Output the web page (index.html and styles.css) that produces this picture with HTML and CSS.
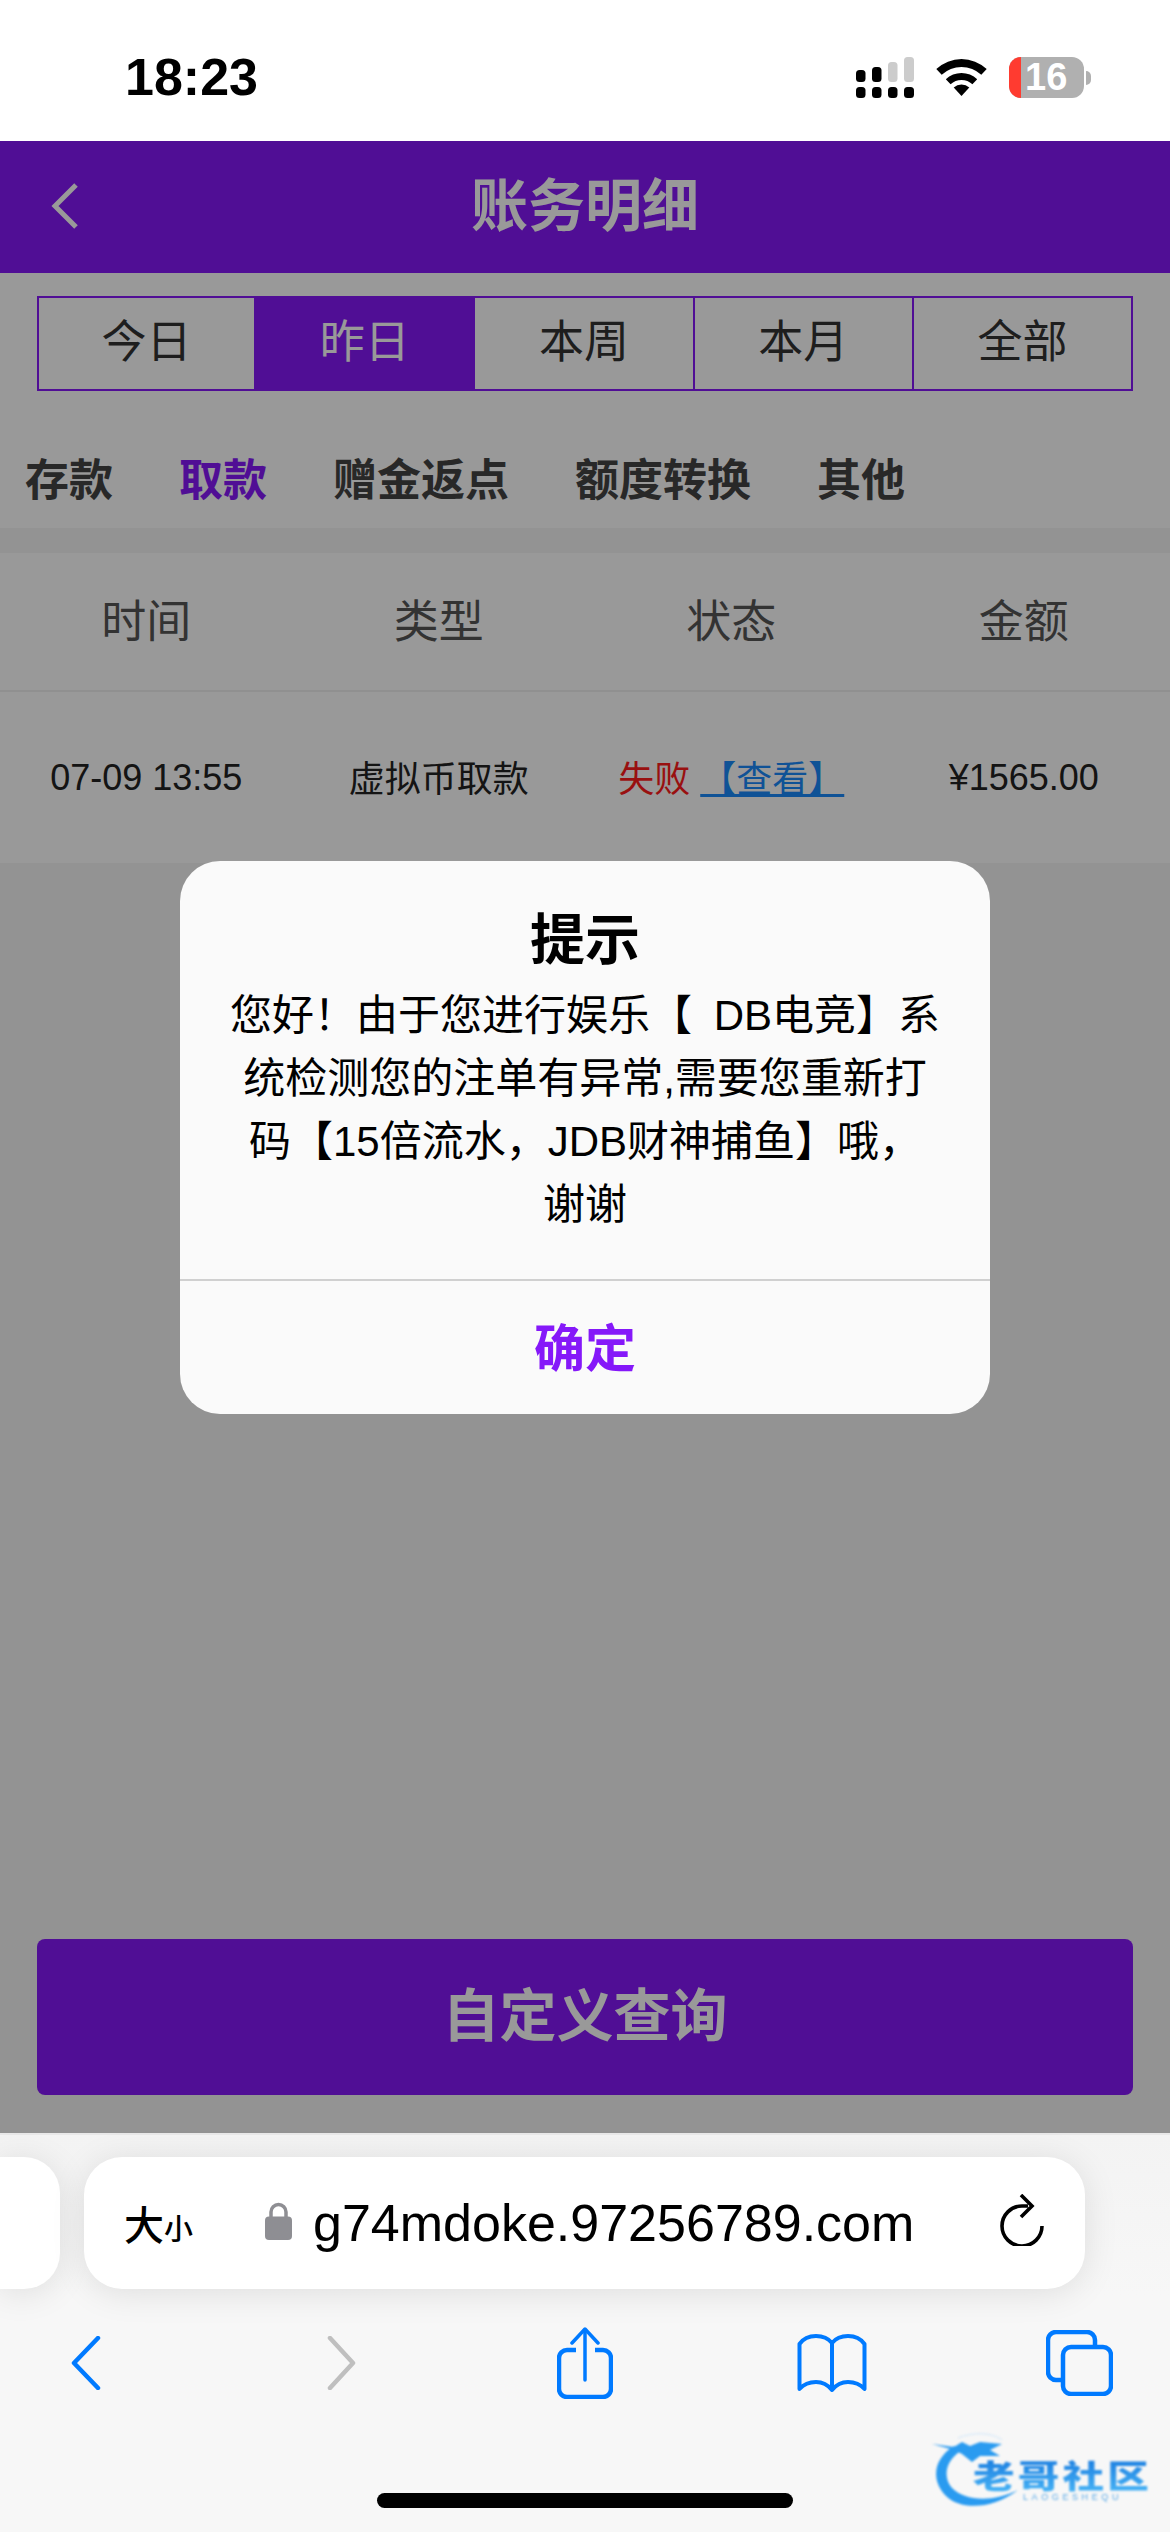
FILE: index.html
```html
<!DOCTYPE html>
<html lang="zh-CN">
<head>
<meta charset="utf-8">
<title>账务明细</title>
<link rel="stylesheet" href="styles.css">
</head>
<body>
<div class="phone">
  <div class="status">
    <div class="time">18:23</div>
    <div class="status-right">
      <svg class="signal" width="58" height="41" viewBox="0 0 58 41">
        <rect x="0" y="13" width="9.5" height="12" rx="3.5" fill="#000"/>
        <rect x="16" y="10" width="9.5" height="15" rx="3.5" fill="#000"/>
        <rect x="32" y="5" width="9.5" height="20" rx="3.5" fill="#ccc"/>
        <rect x="48" y="0" width="10" height="25" rx="3.5" fill="#ccc"/>
        <rect x="0" y="30" width="9.5" height="11" rx="3.5" fill="#000"/>
        <rect x="16" y="30" width="9.5" height="11" rx="3.5" fill="#000"/>
        <rect x="32" y="30" width="9.5" height="11" rx="3.5" fill="#000"/>
        <rect x="48" y="30" width="10" height="11" rx="3.5" fill="#000"/>
      </svg>
      <svg class="wifi" width="51" height="37" viewBox="0 0 51 37">
        <path d="M0.3 10 A37 37 0 0 1 50.7 10 L45.3 15.8 A29 29 0 0 0 5.7 15.8 Z" fill="#000"/>
        <path d="M9.8 20.2 A23 23 0 0 1 41.2 20.2 L36.4 25.3 A16 16 0 0 0 14.6 25.3 Z" fill="#000"/>
        <path d="M17.7 28.6 A11.5 11.5 0 0 1 33.3 28.6 L25.5 37 Z" fill="#000"/>
      </svg>
      <div class="battery">
        <span class="battery-low"></span>
        <span class="battery-num">16</span>
      </div>
    </div>
  </div>

  <div class="webview">
    <header class="navbar">
      <svg class="nav-back" width="28" height="46" viewBox="0 0 28 46">
        <path d="M25 2 L4 23 L25 44" fill="none" stroke="#fff" stroke-width="5"/>
      </svg>
      <h1 class="nav-title">账务明细</h1>
    </header>

    <div class="segments">
      <div class="seg">今日</div>
      <div class="seg seg-active">昨日</div>
      <div class="seg">本周</div>
      <div class="seg">本月</div>
      <div class="seg">全部</div>
    </div>

    <nav class="tabs">
      <span class="tab">存款</span>
      <span class="tab tab-active">取款</span>
      <span class="tab">赠金返点</span>
      <span class="tab">额度转换</span>
      <span class="tab">其他</span>
    </nav>

    <div class="table">
      <div class="thead">
        <div>时间</div>
        <div>类型</div>
        <div>状态</div>
        <div>金额</div>
      </div>
      <div class="trow">
        <div>07-09 13:55</div>
        <div class="cell-cjk">虚拟币取款</div>
        <div class="cell-cjk"><span class="fail">失败</span> <span class="view">【查看】</span></div>
        <div>¥1565.00</div>
      </div>
    </div>

    <button class="query">自定义查询</button>

    <div class="mask">
      <div class="dialog">
        <div class="dialog-main">
          <h2 class="dialog-title">提示</h2>
          <p class="dialog-text">您好！由于您进行娱乐【 DB电竞】系统检测您的注单有异常,需要您重新打码【15倍流水，JDB财神捕鱼】哦，谢谢</p>
        </div>
        <div class="dialog-ok">确定</div>
      </div>
    </div>
  </div>

  <div class="chrome">
    <div class="url-row">
      <div class="tab-stub"></div>
      <div class="urlbar">
        <span class="aa"><span class="aa-big">大</span><span class="aa-small">小</span></span>
        <svg class="lock" width="27" height="39" viewBox="0 0 27 39">
          <path d="M6 17 V11 a7.5 7.5 0 0 1 15 0 V17" fill="none" stroke="#8e8e93" stroke-width="3.5"/>
          <rect x="0" y="15.500" width="27" height="23.500" rx="4" fill="#8e8e93"/>
        </svg>
        <span class="url">g74mdoke.97256789.com</span>
        <svg class="reload" width="44" height="52" viewBox="0 0 44 52">
          <path d="M28 12 H22 A20 20 0 1 0 42 32" fill="none" stroke="#000" stroke-width="3.600"/>
          <path d="M21 1 L32 12 L21 23" fill="none" stroke="#000" stroke-width="3.600"/>
        </svg>
      </div>
    </div>
    <div class="toolbar">
      <svg class="tb tb-back" width="30" height="54" viewBox="0 0 30 54">
        <path d="M27 2 L3 27 L27 52" fill="none" stroke="#007aff" stroke-width="4.500" stroke-linecap="round" stroke-linejoin="round"/>
      </svg>
      <svg class="tb tb-forward" width="29" height="54" viewBox="0 0 29 54">
        <path d="M3 2 L26 27 L3 52" fill="none" stroke="#bfbfbf" stroke-width="4.500" stroke-linecap="round" stroke-linejoin="round"/>
      </svg>
      <svg class="tb tb-share" width="56" height="72" viewBox="0 0 56 72">
        <g fill="none" stroke="#007aff" stroke-linecap="round" stroke-linejoin="round">
          <path d="M19 23 H10 a8 8 0 0 0 -8 8 V62 a8 8 0 0 0 8 8 H46 a8 8 0 0 0 8 -8 V31 a8 8 0 0 0 -8 -8 H38" stroke-width="4.500" stroke-linecap="butt"/>
          <path d="M28 3 V53" stroke-width="3.500"/>
          <path d="M15 16 L28 2 L41 16" stroke-width="3.500"/>
        </g>
      </svg>
      <svg class="tb tb-book" width="70" height="58" viewBox="0 0 70 58">
        <path d="M35 9 C31 4 25 2 19 2 C12 2 6 5 2.500 10 V55 C7 50 13 48 19 48 C25 48 31 51 35 56 C39 51 45 48 51 48 C57 48 63 50 67.500 55 V10 C64 5 58 2 51 2 C45 2 39 4 35 9 V56" fill="none" stroke="#007aff" stroke-width="4" stroke-linejoin="round" stroke-linecap="round"/>
      </svg>
      <svg class="tb tb-tabs" width="67" height="66" viewBox="0 0 67 66">
        <g fill="none" stroke="#007aff" stroke-width="4.500">
          <path d="M16 50 H10 a8 8 0 0 1 -8 -8 V10 a8 8 0 0 1 8 -8 H41 a8 8 0 0 1 8 8 V17"/>
          <rect x="17" y="17" width="48" height="47" rx="8"/>
        </g>
      </svg>
    </div>
    <div class="homebar"></div>
    <div class="logo">
      <svg class="logo-dragon" width="90" height="76" viewBox="0 0 90 76">
        <path d="M22 14 C2 26 -2 48 14 64 C28 78 60 78 86 58 C62 70 34 70 20 56 C10 44 14 28 30 18 Z" fill="#2a9bf0"/>
        <path d="M0 12 L22 15 L30 10 L38 14 L48 10 L70 12 L58 18 L68 24 L48 24 L40 30 L30 22 L22 18 Z" fill="#2a9bf0"/>
        <path d="M26 6 C40 0 60 0 70 8" fill="none" stroke="#cfe6fa" stroke-width="1"/>
      </svg>
      <div class="logo-name">老哥社区</div>
      <div class="logo-en">LAOGESHEQU</div>
    </div>
  </div>
</div>
</body>
</html>
```
FILE: styles.css
```css
* { box-sizing: border-box; }
html, body { margin: 0; padding: 0; }
body {
  width: 1170px;
  height: 2532px;
  overflow: hidden;
  background: #fff;
  font-family: "Liberation Sans", "Noto Sans CJK SC", sans-serif;
  color: #000;
}
.phone { display: flex; flex-direction: column; width: 1170px; height: 2532px; }

/* status bar */
.status {
  height: 141px;
  flex: none;
  padding: 12px 79px 0 125px;
  display: flex;
  align-items: center;
  justify-content: space-between;
  background: #fff;
}
.time { font-size: 52px; font-weight: 700; line-height: 60px; }
.status-right { display: flex; align-items: center; gap: 22px; margin-top: 2px; }
.signal, .wifi { display: block; }
.battery {
  position: relative;
  width: 75px;
  height: 41px;
  margin-right: 7px;
  border-radius: 12px;
  background: #b0b0b0;
  display: flex;
  align-items: center;
}
.battery::after {
  content: "";
  position: absolute;
  right: -7px;
  top: 14px;
  width: 5px;
  height: 14px;
  border-radius: 0 7px 7px 0;
  background: #b0b0b0;
}
.battery-low { width: 12px; height: 41px; background: #ff3b30; border-radius: 12px 0 0 12px; }
.battery-num { margin-left: 4px; font-size: 38px; font-weight: 700; line-height: 41px; color: #fff; }

/* web page */
.webview {
  position: relative;
  flex: none;
  height: 1992px;
  background: #f5f5f5;
  display: flex;
  flex-direction: column;
}
.navbar {
  position: relative;
  flex: none;
  height: 132px;
  background: #8518f9;
  display: flex;
  align-items: center;
  justify-content: center;
}
.nav-back { position: absolute; left: 51px; top: 42px; }
.nav-title { margin: 0 0 2px; font-size: 57px; font-weight: 700; color: #fff; line-height: 70px; }

.segments {
  flex: none;
  display: grid;
  grid-template-columns: repeat(5, 1fr);
  padding: 23px 37px 0;
  height: 118px;
  background: #fff;
}
.seg {
  display: flex;
  align-items: center;
  justify-content: center;
  border: 2px solid #8518f9;
  border-left-width: 0;
  font-size: 45px;
  color: #333;
  padding-bottom: 11px;
}
.seg:first-child { border-left-width: 2px; }
.seg-active { background: #8518f9; color: #fff; }

.tabs {
  flex: none;
  height: 137px;
  padding: 43px 0 0 25px;
  background: #fff;
  display: flex;
  align-items: center;
  gap: 66px;
}
.tab { font-size: 44px; font-weight: 700; color: #444; line-height: 60px; }
.tab-active { color: #8518f9; }

.table { flex: none; margin-top: 25px; background: #fff; }
.thead, .trow {
  display: grid;
  grid-template-columns: repeat(4, 1fr);
  align-items: center;
  text-align: center;
}
.thead { height: 139px; border-bottom: 2px solid #f0f0f0; font-size: 45px; color: #555; padding-bottom: 6px; }
.trow { height: 171px; font-size: 36px; color: #222; }
.cell-cjk { padding-bottom: 4px; }
.fail { color: #ff1c1c; }
.view { color: #1989fa; text-decoration: underline; }

.query {
  flex: none;
  display: block;
  margin: auto 37px 38px;
  width: 1096px;
  height: 156px;
  padding: 0 0 12px;
  border: 0;
  border-radius: 8px;
  background: #8518f9;
  color: #fff;
  font-family: inherit;
  font-size: 57px;
  font-weight: 700;
}

/* modal */
.mask {
  position: absolute;
  inset: 0;
  background: rgba(0, 0, 0, .4);
  display: flex;
  align-items: center;
  justify-content: center;
}
.dialog {
  width: 810px;
  height: 553px;
  border-radius: 40px;
  background: #fafafa;
  display: flex;
  flex-direction: column;
  overflow: hidden;
}
.dialog-main { flex: none; height: 420px; padding: 49px 50px 0; border-bottom: 2px solid #d0d0d0; text-align: center; }
.dialog-title { margin: 0; font-size: 55px; font-weight: 700; line-height: 60px; }
.dialog-text { margin: 14px 0 0; font-size: 42px; line-height: 63px; word-spacing: 10px; }
.dialog-ok {
  flex: 1;
  display: flex;
  align-items: center;
  justify-content: center;
  padding-bottom: 4px;
  color: #8518f9;
  font-size: 51px;
  font-weight: 700;
}

/* browser chrome */
.chrome {
  position: relative;
  flex: 1;
  background: linear-gradient(#f3f3f3, #f7f7f7 160px);
  border-top: 2px solid #e8e8e8;
}
.url-row { display: flex; gap: 24px; padding-top: 22px; height: 154px; }
.tab-stub {
  width: 60px;
  height: 132px;
  border-radius: 0 36px 36px 0;
  background: #fff;
  box-shadow: 0 4px 34px rgba(0, 0, 0, .1);
}
.urlbar {
  width: 1001px;
  height: 132px;
  border-radius: 38px;
  background: #fff;
  box-shadow: 0 4px 34px rgba(0, 0, 0, .1);
  display: flex;
  align-items: center;
  padding-left: 40px;
}
.aa { width: 141px; flex: none; display: flex; align-items: baseline; font-weight: 500; }
.aa-big { font-size: 40px; }
.aa-small { font-size: 29px; }
.lock { flex: none; margin-top: -6px; }
.url { margin-left: 21px; font-size: 52px; line-height: 60px; white-space: nowrap; }
.reload { flex: none; margin-left: 86px; margin-top: -6px; }

.toolbar { display: flex; align-items: center; height: 148px; padding-left: 71px; }
.tb { flex: none; display: block; }
.tb-forward { margin-left: 226px; }
.tb-share { margin-left: 201px; }
.tb-book { margin-left: 184px; }
.tb-tabs { margin-left: 179px; }

.homebar { width: 416px; height: 15px; margin: 56px auto 0; border-radius: 8px; background: #000; }

.logo {
  position: absolute;
  left: 932px;
  top: 297px;
  width: 225px;
  height: 78px;
  filter: blur(.8px);
}
.logo-dragon { position: absolute; left: 0; top: 0; }
.logo-name {
  position: absolute;
  left: 41px;
  top: 23px;
  font-size: 40px;
  line-height: 44px;
  font-weight: 900;
  letter-spacing: 3px;
  white-space: nowrap;
  transform: scale(1.04, .8);
  transform-origin: left center;
  background: linear-gradient(#1c7fe0, #49b6f7);
  -webkit-background-clip: text;
  background-clip: text;
  color: transparent;
}
.logo-en {
  position: absolute;
  left: 91px;
  top: 60px;
  font-family: "Liberation Sans", sans-serif;
  font-size: 9px;
  line-height: 10px;
  letter-spacing: 3.600px;
  color: #5aa9e6;
}
```
